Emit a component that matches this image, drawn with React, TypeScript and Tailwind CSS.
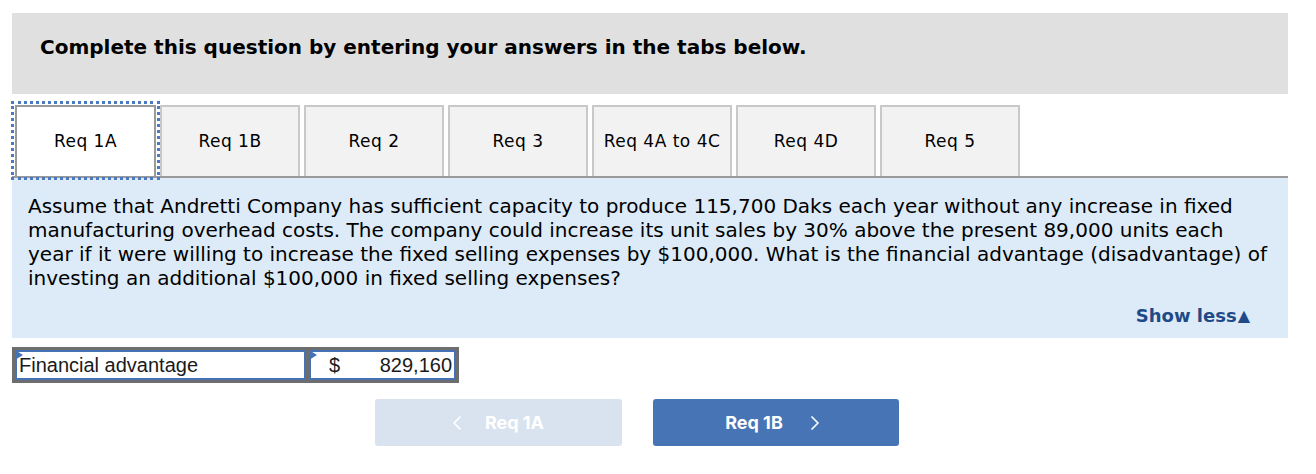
import { ChevronLeft, ChevronRight } from "lucide-react";

const TABS = ["Req 1A", "Req 1B", "Req 2", "Req 3", "Req 4A to 4C", "Req 4D", "Req 5"];

const verdana = "font-['DejaVu_Sans',Verdana,sans-serif]";

export default function App() {
  return (
    <div className="min-h-[474px] w-[1316px] bg-white pl-3 pt-[13px]">
      <div className="w-[1276px]">
        {/* header */}
        <div className={`flex h-[81px] items-center bg-[#e0e0e0] pl-[28px] pb-[13px] ${verdana}`}>
          <span className="text-[20px] font-bold text-black">
            Complete this question by entering your answers in the tabs below.
          </span>
        </div>

        {/* tabs */}
        <div className="mt-[11px] flex gap-1 border-b-2 border-[#9a9a9a] pl-[3px]">
          {TABS.map((t, i) =>
            i === 0 ? (
              <div
                key={t}
                className={`flex h-[71px] w-[141px] items-center justify-center border-2 border-b-0 border-[#9a9a9a] bg-white text-[17px] tracking-[0.5px] text-black outline-[3px] outline-offset-[1px] outline-dotted outline-[#4a7bc0] ${verdana}`}
              >
                {t}
              </div>
            ) : (
              <div
                key={t}
                className={`flex h-[71px] w-[140px] items-center justify-center border-2 border-b-0 border-[#c8c8c8] bg-[#f2f2f2] text-[17px] tracking-[0.5px] text-black ${verdana}`}
              >
                {t}
              </div>
            )
          )}
        </div>

        {/* question panel */}
        <div className={`h-[160px] bg-[#ddebf8] pl-4 pt-4 ${verdana}`}>
          <p className="whitespace-nowrap text-[20px] leading-[24px] text-black">
            Assume that Andretti Company has sufficient capacity to produce 115,700 Daks each year without any increase in fixed
            <br />
            manufacturing overhead costs. The company could increase its unit sales by 30% above the present 89,000 units each
            <br />
            year if it were willing to increase the fixed selling expenses by $100,000. What is the financial advantage (disadvantage) of
            <br />
            investing an additional $100,000 in fixed selling expenses?
          </p>
          <div className="mt-[12px] flex justify-end pr-[38px]">
            <span className="flex items-center text-[18px] font-bold text-[#1f4a87]">
              Show less
              <span className="ml-[1px] text-[16px]">▲</span>
            </span>
          </div>
        </div>

        {/* answer row */}
        <div className="mt-[9px] flex w-[447px] gap-[3px] bg-[#6d6d6d] p-[3px] font-['Liberation_Sans',Arial,sans-serif] text-[20px] text-[#1a1a1a]">
          <div className="relative flex h-[30px] w-[291px] items-center border-2 border-[#4472b4] bg-white pl-[2px]">
            <Marker />
            Financial advantage
          </div>
          <div className="relative flex h-[30px] flex-1 items-center border-2 border-[#4472b4] bg-white pl-[18px] pr-[2px]">
            <Marker />
            <span>$</span>
            <span className="ml-auto">829,160</span>
          </div>
        </div>

        {/* nav buttons */}
        <div className="ml-[363px] mt-[16px] flex gap-[31px] font-['Inter','Roboto',sans-serif] text-[18px] font-bold text-white">
          <div className="flex h-[47px] w-[247px] items-center justify-center gap-[16px] rounded-[3px] bg-[#d9e3ef]">
            <ChevronLeft size={24} strokeWidth={1.75} className="-ml-[8px]" />
            <span>Req 1A</span>
          </div>
          <div className="flex h-[47px] w-[246px] items-center justify-center gap-[20px] rounded-[3px] bg-[#4674b4]">
            <span>Req 1B</span>
            <ChevronRight size={24} strokeWidth={1.75} />
          </div>
        </div>
      </div>
    </div>
  );
}

function Marker() {
  return (
    <span className="absolute -left-[2px] -top-[2px] h-0 w-0 border-y-[5px] border-l-[8px] border-y-transparent border-l-[#4472b4]" />
  );
}
